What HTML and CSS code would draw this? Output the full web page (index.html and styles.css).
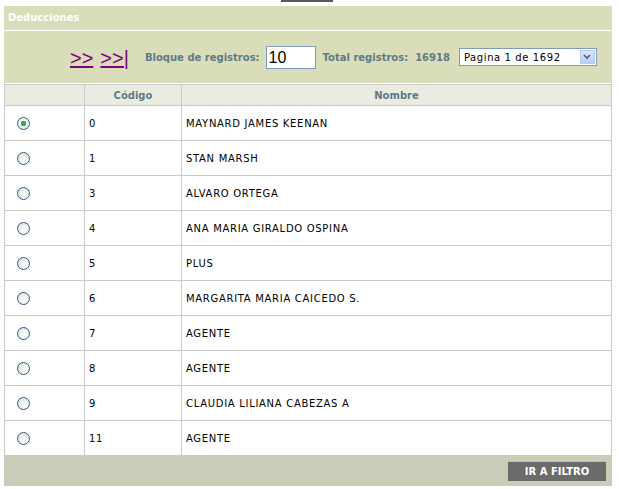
FILE: index.html
```html
<!DOCTYPE html>
<html lang="es">
<head>
<meta charset="utf-8">
<title>Deducciones</title>
<link rel="stylesheet" href="styles.css">
</head>
<body>
<div class="topline"></div>
<div class="panel">
  <div class="title">Deducciones</div>
  <div class="toolbar">
    <a class="nav" href="#">&gt;&gt;</a>
    <a class="nav" href="#">&gt;&gt;|</a>
    <span class="label lbl-block">Bloque de registros:</span>
    <span class="input">10</span>
    <span class="label lbl-total">Total registros:&nbsp; 16918</span>
    <span class="select"><span class="select-text">Pagina 1 de 1692</span><span class="select-btn"><svg width="8" height="6" viewBox="0 0 8 6"><path d="M1 1 L4 4 L7 1" fill="none" stroke="#4d6185" stroke-width="1.6"/></svg></span></span>
  </div>
  <table class="grid">
    <colgroup><col class="w1"><col class="w2"><col></colgroup>
    <thead>
      <tr><th></th><th>Código</th><th>Nombre</th></tr>
    </thead>
    <tbody>
      <tr><td class="c1"><span class="radio checked"></span></td><td>0</td><td>MAYNARD JAMES KEENAN</td></tr>
      <tr><td class="c1"><span class="radio"></span></td><td>1</td><td>STAN MARSH</td></tr>
      <tr><td class="c1"><span class="radio"></span></td><td>3</td><td>ALVARO ORTEGA</td></tr>
      <tr><td class="c1"><span class="radio"></span></td><td>4</td><td>ANA MARIA GIRALDO OSPINA</td></tr>
      <tr><td class="c1"><span class="radio"></span></td><td>5</td><td>PLUS</td></tr>
      <tr><td class="c1"><span class="radio"></span></td><td>6</td><td>MARGARITA MARIA CAICEDO S.</td></tr>
      <tr><td class="c1"><span class="radio"></span></td><td>7</td><td>AGENTE</td></tr>
      <tr><td class="c1"><span class="radio"></span></td><td>8</td><td>AGENTE</td></tr>
      <tr><td class="c1"><span class="radio"></span></td><td>9</td><td>CLAUDIA LILIANA CABEZAS A</td></tr>
      <tr><td class="c1"><span class="radio"></span></td><td>11</td><td>AGENTE</td></tr>
    </tbody>
  </table>
  <div class="footer"><span class="btn">IR A FILTRO</span></div>
</div>
</body>
</html>
```
FILE: styles.css
```css
html, body { margin: 0; padding: 0; background: #fff; }
body { font-family: "DejaVu Sans", Verdana, sans-serif; font-size: 10px; color: #000; }

.topline { margin-left: 281px; width: 52px; height: 2px; background: #5a5a5a; }

.panel { margin: 4px 0 0 4px; width: 608px; }

.title {
  height: 24px; line-height: 24px;
  background: #d9ddb9;
  border-bottom: 1px solid #fff;
  color: #fff; font-weight: bold; font-size: 10px;
  padding-left: 4px;
}

.toolbar {
  height: 52px;
  background: #d9ddb9;
  display: flex; align-items: center;
  padding-left: 66px;
  border-bottom: 1px solid #fff;
  white-space: nowrap;
}
.toolbar > * { flex-shrink: 0; }

.nav {
  font-family: "Liberation Sans", Arial, sans-serif;
  font-size: 20px; color: #800080; text-decoration: underline;
  margin-right: 7px; margin-top: 2px;
}
.nav + .nav { margin-right: 16px; }

.label { color: #5d7b87; font-weight: bold; font-size: 10px; }
.lbl-block { margin-right: 6px; }
.lbl-total { margin-left: 7px; margin-right: 9px; }

.input {
  box-sizing: border-box; width: 50px; height: 23px;
  border: 1px solid #7f9db9; background: #fff;
  font-family: "Liberation Sans", Arial, sans-serif; font-size: 16px;
  line-height: 21px; padding-left: 2px;
}

.select {
  box-sizing: border-box; width: 138px; height: 18px;
  border: 1px solid #7f9db9; background: #fff;
  display: flex; align-items: center; justify-content: space-between;
  padding: 0 1px 0 4px;
}
.select-text { font-size: 10px; letter-spacing: 0.6px; }
.select-btn {
  width: 15px; height: 14px; box-sizing: border-box;
  border: 1px solid #b8cbf1;
  background: linear-gradient(#dbe6fd, #b7cbf8);
  display: flex; align-items: center; justify-content: center;
}

.grid { width: 608px; border-collapse: collapse; table-layout: fixed; }
.w1 { width: 80px; }
.w2 { width: 97px; }
.grid th, .grid td { border: 1px solid #cacaca; }
.grid th {
  height: 20px; background: #eaece2;
  color: #5d7b87; font-weight: bold; font-size: 10px;
  text-align: center; padding: 0;
}
.grid td {
  height: 34px; padding: 0 0 0 4px;
  font-size: 10px; letter-spacing: 0.7px;
}
.grid td.c1 { padding-left: 12px; }

.radio {
  display: block; width: 13px; height: 13px; box-sizing: border-box;
  border-radius: 50%;
  border: 1px solid #2f5c8c;
  background: radial-gradient(circle at 65% 65%, #fff 0, #f4f4f0 40%, #d8d8d0 100%);
}
.radio.checked {
  background: radial-gradient(circle, #3fb34a 0, #39a845 2.5px, #f6f6f2 3px, #e2e2da 100%);
}

.footer {
  height: 30px; background: #cbcdb9;
  display: flex; align-items: center; justify-content: flex-end;
  padding-right: 6px;
}
.btn {
  width: 98px; height: 19px; line-height: 19px;
  background: #6b6b6b; color: #fff; font-weight: bold; font-size: 10px;
  text-align: center;
  border-top: 1px solid #bdbdbd;
}
```
